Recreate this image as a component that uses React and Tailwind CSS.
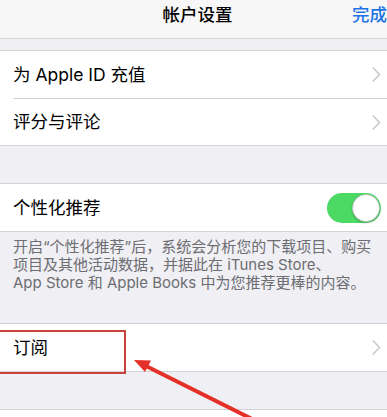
import React from "react";

const Chevron = () => (
  <svg width="9" height="15" viewBox="0 0 9 15" className="shrink-0">
    <path d="M1.2 1 L7.6 7.5 L1.2 14" fill="none" stroke="#c7c7cc" strokeWidth="1.5" strokeLinecap="round" strokeLinejoin="round" />
  </svg>
);

const Row = ({ label, chevron = true, children }) => (
  <div className="flex h-full items-center justify-between pl-[13px] pr-[6px]">
    <span className="text-[17.5px] text-black leading-none">{label}</span>
    {chevron && <Chevron />}
    {children}
  </div>
);

export default function App() {
  return (
    <div
      className="relative w-[387px] h-[417px] overflow-hidden bg-[#efeff4]"
      style={{ fontFamily: 'Inter, "Noto Sans CJK SC", sans-serif' }}
    >
      {/* Nav bar */}
      <div className="relative flex h-[39px] items-start justify-center border-b border-[#d6d6da] bg-[#f7f7f8] pl-[8px] pt-[5px]">
        <span className="text-[17.5px] font-medium text-black leading-[20px]">帐户设置</span>
        <span className="absolute right-0 top-[5px] text-[17.5px] font-medium text-[#1d74e6] leading-[20px]">完成</span>
      </div>

      {/* Group 1 */}
      <div className="mt-[11px] border-y border-[#d1d1d6] bg-white">
        <div className="h-[47px]">
          <Row label="为 Apple ID 充值" />
        </div>
        <div className="ml-[13px] h-px bg-[#d1d1d6]" />
        <div className="h-[46px]">
          <Row label="评分与评论" />
        </div>
      </div>

      {/* Group 2 */}
      <div className="mt-[37px] border-y border-[#d1d1d6] bg-white">
        <div className="h-[47px]">
          <Row label="个性化推荐" chevron={false}>
            <div className="relative flex h-[30px] w-[54px] items-center justify-end rounded-full bg-[#4cd964] pr-[1px]">
              <div className="h-[28px] w-[28px] rounded-full border border-[#b9c9bd] bg-white shadow-[0_1px_2px_rgba(0,0,0,0.25)]" />
            </div>
          </Row>
        </div>
      </div>

      {/* Footer */}
      <div className="h-[91px] pl-[13px] pr-[4px] pt-[6px] text-[15px] leading-[18px] text-[#6d6d72] whitespace-nowrap">
        开启“个性化推荐”后，系统会分析您的下载项目、购买
        <br />
        项目及其他活动数据，并据此在 iTunes Store、
        <br />
        App Store 和 Apple Books 中为您推荐更棒的内容。
      </div>

      {/* Group 3 */}
      <div className="border-y border-[#d1d1d6] bg-white">
        <div className="h-[47px]">
          <Row label="订阅" />
        </div>
      </div>

      <div className="mt-[37px] h-[20px] border-t border-[#d1d1d6] bg-white" />

      {/* Annotation: red box */}
      <div className="absolute left-[-2px] top-[330px] h-[44px] w-[128px] border-2 border-[#c9443c]" />

      {/* Annotation: arrow */}
      <svg className="absolute left-0 top-0" width="387" height="417" viewBox="0 0 387 417">
        <line x1="258" y1="422" x2="146" y2="366" stroke="#e5302a" strokeWidth="4" strokeLinecap="round" />
        <polygon points="134,360 151,360.5 145,372" fill="#e5302a" />
      </svg>
    </div>
  );
}
